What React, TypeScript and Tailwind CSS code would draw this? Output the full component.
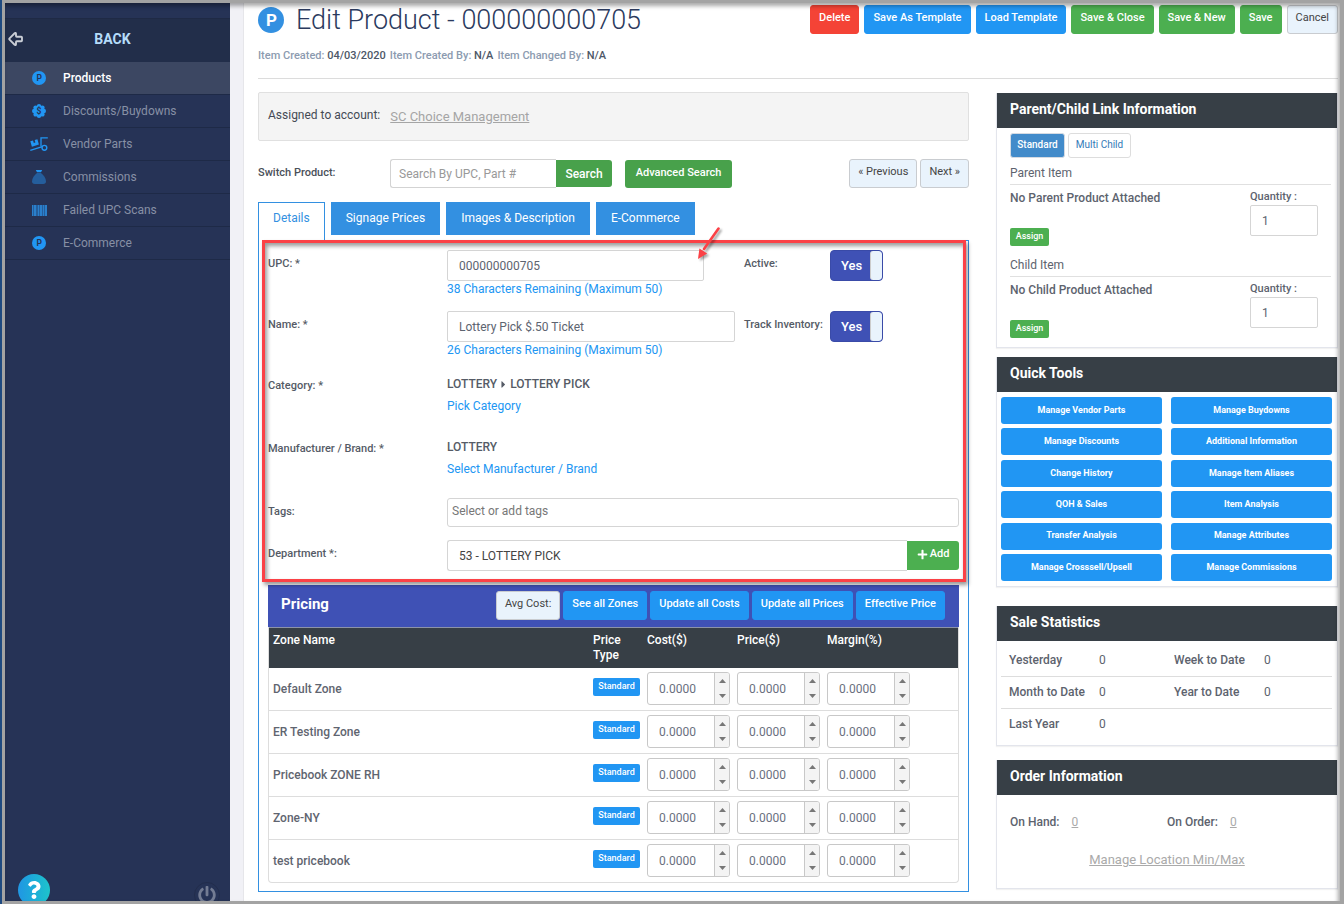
import { type ReactNode, useId, useState } from 'react';
import { ArrowBigLeft } from 'lucide-react';
import { FaCaretRight, FaPlus, FaPowerOff, FaQuestion } from 'react-icons/fa';
import clsx from 'clsx';

const navItems = [
  { label: 'Products', icon: <LetterDot letter="P" />, active: true },
  { label: 'Discounts/Buydowns', icon: <DiscountIcon /> },
  { label: 'Vendor Parts', icon: <DollyIcon /> },
  { label: 'Commissions', icon: <SackIcon /> },
  { label: 'Failed UPC Scans', icon: <BarcodeIcon /> },
  { label: 'E-Commerce', icon: <LetterDot letter="P" /> },
];

const tabs = ['Details', 'Signage Prices', 'Images & Description', 'E-Commerce'];

const zones = ['Default Zone', 'ER Testing Zone', 'Pricebook ZONE RH', 'Zone-NY', 'test pricebook'];

const priceColumns = ['Cost', 'Price', 'Margin'];

const pricingActions = ['See all Zones', 'Update all Costs', 'Update all Prices', 'Effective Price'];

const quickTools = [
  'Manage Vendor Parts',
  'Manage Buydowns',
  'Manage Discounts',
  'Additional Information',
  'Change History',
  'Manage Item Aliases',
  'QOH & Sales',
  'Item Analysis',
  'Transfer Analysis',
  'Manage Attributes',
  'Manage Crosssell/Upsell',
  'Manage Commissions',
];

const saleStats = [
  [
    ['Yesterday', '0'],
    ['Week to Date', '0'],
  ],
  [
    ['Month to Date', '0'],
    ['Year to Date', '0'],
  ],
  [['Last Year', '0']],
];

function LetterDot({ letter }: { letter: string }) {
  return (
    <svg viewBox="0 0 14 14" className="size-3.5" aria-hidden>
      <circle cx="7" cy="7" r="7" fill="#2196f3" />
      <text x="7.2" y="10" fontSize="8.5" fontWeight="700" textAnchor="middle" fill="#263356">
        {letter}
      </text>
    </svg>
  );
}

function DiscountIcon() {
  return (
    <svg viewBox="0 0 14 14" className="size-3.5" aria-hidden>
      <g fill="#2196f3">
        <circle cx="7" cy="7" r="5.8" />
        <circle cx="7" cy="2.2" r="2.2" />
        <circle cx="7" cy="11.8" r="2.2" />
        <circle cx="2.2" cy="7" r="2.2" />
        <circle cx="11.8" cy="7" r="2.2" />
        <circle cx="3.6" cy="3.6" r="2.2" />
        <circle cx="10.4" cy="3.6" r="2.2" />
        <circle cx="3.6" cy="10.4" r="2.2" />
        <circle cx="10.4" cy="10.4" r="2.2" />
      </g>
      <text x="7" y="10" fontSize="8.5" fontWeight="700" textAnchor="middle" fill="#263356">
        $
      </text>
    </svg>
  );
}

function DollyIcon() {
  return (
    <svg viewBox="0 0 18 14" className="h-3.5 w-[18px]" fill="none" aria-hidden>
      <path d="M0.3 4.3 3 3.5 3.8 6 5.4 5.5 4.7 3 7.4 2.2 8.9 7.6 1.9 9.8Z" fill="#2196f3" />
      <path d="M17.8 0.8H11V9.6" stroke="#2196f3" strokeWidth="1.3" />
      <path d="M0.3 13.3 12.4 9.6" stroke="#2196f3" strokeWidth="1.4" />
      <circle cx="14.4" cy="10.8" r="2.4" stroke="#2196f3" strokeWidth="1.4" />
    </svg>
  );
}

function SackIcon() {
  return (
    <svg viewBox="0 0 14 14" className="size-3.5" aria-hidden>
      <path d="M3.8 0H10.2L9 2.3H5Z" fill="#2196f3" />
      <path d="M5 3H9C11.6 5 14 8.4 14 11.2 14 13 13 14 11.3 14H2.7C1 14 0 13 0 11.2 0 8.4 2.4 5 5 3Z" fill="#255e9c" />
    </svg>
  );
}

function BarcodeIcon() {
  return (
    <svg viewBox="0 0 15 11" className="h-[11px] w-[15px]" aria-hidden>
      <path d="M0 0H15V11H0Z" fill="#255e9c" />
      <path d="M0 0H1V11H0ZM2 0H4V11H2ZM6 0H7V11H6ZM8 0H10V11H8ZM11 0H12V11H11ZM13 0H15V11H13Z" fill="#2a7fcb" />
    </svg>
  );
}

function Sidebar() {
  return (
    <aside className="flex w-[225px] shrink-0 flex-col bg-[#263356]">
      <button
        type="button"
        className="mt-[15px] flex h-11 items-center border-t border-[#1f2a45] bg-[#222e4a] pb-[3px] text-[14px] font-bold text-[#b5dcfa]"
      >
        <ArrowBigLeft className="ml-0.5 size-[18px] text-[#c9cdd5]" strokeWidth={2.5} aria-hidden />
        <span className="flex-1 pr-[30px] text-center">BACK</span>
      </button>
      <nav>
        <ul>
          {navItems.map((item) => (
            <li key={item.label}>
              <a
                href="#"
                className={clsx(
                  'flex h-[33px] items-center border-b border-[#1e2a47] text-[12px]',
                  item.active ? 'bg-[#3c4762] font-medium text-white' : 'text-[#8790a5]',
                )}
              >
                <span className="ml-[25px] flex w-[18px] justify-center">{item.icon}</span>
                <span className="ml-[15px] pb-px">{item.label}</span>
              </a>
            </li>
          ))}
        </ul>
      </nav>
      <div className="mt-auto flex h-[27px] items-start justify-between overflow-hidden pr-2.5 pl-[13px]">
        <button
          type="button"
          aria-label="Help"
          className="flex size-8 items-center justify-center rounded-full bg-linear-to-r from-[#2196e3] to-[#1fc3cb] text-white"
        >
          <FaQuestion className="size-[18px]" />
        </button>
        <button
          type="button"
          aria-label="Log out"
          className="mt-2 flex size-[26px] items-center justify-center rounded-full border border-[#222d4c] text-[#737c93]"
        >
          <FaPowerOff className="size-[18px]" />
        </button>
      </div>
    </aside>
  );
}

function ActionButton({ children, color }: { children: ReactNode; color: string }) {
  return (
    <button
      type="button"
      className={clsx('h-[29px] rounded-[3px] border px-2 pb-0.5 text-[11px] whitespace-nowrap', color)}
    >
      {children}
    </button>
  );
}

const blue = 'border-[#2196f3] bg-[#2196f3] font-medium text-white';
const green = 'border-[#4caf50] bg-[#4caf50] font-medium text-white';
const pale = 'border-[#c9ccd0] bg-[#e9f3fc] text-[#444]';

function PageHeader() {
  return (
    <header className="border-b border-[#dcdcdc] pt-0.5 pb-3">
      <div className="flex items-start justify-between">
        <h1 className="flex items-center gap-3 text-[27px] leading-[30px] font-light text-[#2b3a5e]">
          <svg viewBox="0 0 26 26" className="size-[26px]" aria-hidden>
            <circle cx="13" cy="13" r="13" fill="#3390e1" />
            <text x="13.5" y="19" fontSize="17" fontWeight="700" textAnchor="middle" fill="#fff">
              P
            </text>
          </svg>
          Edit Product - 000000000705
        </h1>
        <div className="flex gap-[5px]">
          <ActionButton color="border-[#f44336] bg-[#f44336] font-medium text-white">Delete</ActionButton>
          <ActionButton color={blue}>Save As Template</ActionButton>
          <ActionButton color={blue}>Load Template</ActionButton>
          <ActionButton color={green}>Save &amp; Close</ActionButton>
          <ActionButton color={green}>Save &amp; New</ActionButton>
          <ActionButton color={green}>Save</ActionButton>
          <ActionButton color={pale}>Cancel</ActionButton>
        </div>
      </div>
      <p className="mt-[11px] flex gap-1 text-[11px] leading-5 font-medium text-[#8c9bb0]">
        <span>
          Item Created: <b className="font-medium text-[#4d5767]">04/03/2020</b>
        </span>
        <span>
          Item Created By: <b className="font-medium text-[#4d5767]">N/A</b>
        </span>
        <span>
          Item Changed By: <b className="font-medium text-[#4d5767]">N/A</b>
        </span>
      </p>
    </header>
  );
}

function ProductSwitcher() {
  return (
    <form className="mt-[18px] flex h-[29px] items-center">
      <label htmlFor="switch-product" className="w-[132px] text-[11px] font-medium text-[#4a5059]">
        Switch Product:
      </label>
      <input
        id="switch-product"
        placeholder="Search By UPC, Part #"
        className="h-[29px] w-[166px] rounded-l-[3px] border border-r-0 border-[#d3d3d3] px-2 text-[12px] placeholder:text-[#999]"
      />
      <button type="button" className="h-[27px] w-14 rounded-r-[3px] bg-[#48a14b] text-[12px] font-medium text-white">
        Search
      </button>
      <button
        type="button"
        className="ml-[13px] h-7 w-[107px] rounded-[3px] bg-[#48a14b] text-[11px] font-medium text-white"
      >
        Advanced Search
      </button>
      <div className="ml-auto flex gap-[3px]">
        <ActionButton color={pale}>« Previous</ActionButton>
        <ActionButton color={pale}>Next »</ActionButton>
      </div>
    </form>
  );
}

function Toggle({ label }: { label: string }) {
  const id = useId();
  const [on, setOn] = useState(true);
  return (
    <>
      <label htmlFor={id} className="w-[86px] pt-1 text-[11px] leading-5 font-medium whitespace-nowrap text-[#555b66]">
        {label}
      </label>
      <label className="flex h-[31px] w-[53px] cursor-pointer overflow-hidden rounded-[4px] border border-[#3a4ba8] bg-[#3f51b5]">
        <input id={id} type="checkbox" checked={on} onChange={() => setOn(!on)} className="sr-only" />
        <span className="flex-1 pl-0.5 text-center text-[13px] leading-[30px] font-medium text-white">
          {on ? 'Yes' : 'No'}
        </span>
        <span className="w-3 rounded-[3px] border-l border-[#ccc] bg-[#e9f3fc]" />
      </label>
    </>
  );
}

const labelClass = 'w-[179px] shrink-0 text-[11px] leading-5 font-medium text-[#555b66]';
const boxClass = 'rounded-[2px] border border-[#d5d5d5] bg-white text-[12px] text-[#5d6470]';

function DetailsForm() {
  return (
    <div className="relative">
      <div className="flex h-[61px] items-start">
        <label htmlFor="upc" className={clsx(labelClass, 'pt-1')}>
          UPC: *
        </label>
        <div className="w-[297px] text-[12px] leading-4 text-[#2196f3]">
          <input id="upc" defaultValue="000000000705" className={clsx(boxClass, 'block h-[31px] w-[257px] px-[11px]')} />
          38 Characters Remaining (Maximum 50)
        </div>
        <Toggle label="Active:" />
      </div>
      <div className="flex h-[63px] items-start">
        <label htmlFor="name" className={clsx(labelClass, 'pt-1')}>
          Name: *
        </label>
        <div className="w-[297px] text-[12px] leading-4 text-[#2196f3]">
          <input
            id="name"
            defaultValue="Lottery Pick $.50 Ticket"
            className={clsx(boxClass, 'block h-[31px] w-[288px] px-[11px]')}
          />
          26 Characters Remaining (Maximum 50)
        </div>
        <Toggle label="Track Inventory:" />
      </div>
      <div className="flex h-[63px] items-start text-[12px] leading-5">
        <span className={clsx(labelClass, 'pt-0.5')}>Category: *</span>
        <div>
          <p className="mb-0.5 flex items-center gap-px font-medium text-[#555b66]">
            LOTTERY <FaCaretRight className="size-[11px]" aria-label="then" /> LOTTERY PICK
          </p>
          <a href="#" className="text-[#2196f3]">
            Pick Category
          </a>
        </div>
      </div>
      <div className="flex h-[61px] items-start text-[12px] leading-5">
        <span className={clsx(labelClass, 'pt-0.5')}>Manufacturer / Brand: *</span>
        <div>
          <p className="mb-0.5 font-medium text-[#555b66]">LOTTERY</p>
          <a href="#" className="text-[#2196f3]">
            Select Manufacturer / Brand
          </a>
        </div>
      </div>
      <div className="flex items-start">
        <label htmlFor="tags" className={clsx(labelClass, 'pt-1')}>
          Tags:
        </label>
        <input
          id="tags"
          placeholder="Select or add tags"
          className="h-[29px] min-w-0 flex-1 rounded-[3px] border border-[#d5d5d5] px-1 pb-1 text-[12px] placeholder:text-[#777]"
        />
      </div>
      <div className="mt-[13px] flex items-start pb-3.5">
        <label htmlFor="department" className={clsx(labelClass, 'pt-1')}>
          Department *:
        </label>
        <select
          id="department"
          className="h-[31px] min-w-0 flex-1 appearance-none rounded-l-[3px] border border-r-0 border-[#d5d5d5] bg-white px-[11px] text-[12px] text-[#444]"
        >
          <option>53 - LOTTERY PICK</option>
        </select>
        <button
          type="button"
          className="mt-px flex h-[29px] w-[52px] items-center justify-center gap-0.5 rounded-r-[3px] bg-[#4caf50] pb-0.5 text-[11px] font-medium text-white"
        >
          <FaPlus className="size-[11px]" aria-hidden />
          Add
        </button>
      </div>

      {/* callout around the form, with its pointer */}
      <div className="pointer-events-none absolute -top-2.5 -right-[7px] bottom-[3px] -left-1.5 z-10 border-3 border-[#fb4146] shadow-[2px_3px_4px_rgba(0,0,0,0.4),inset_2px_3px_4px_rgba(0,0,0,0.4)]" />
      <svg
        viewBox="0 0 26 36"
        className="pointer-events-none absolute -top-[25px] left-[428px] z-10 h-9 w-[26px] drop-shadow-[2px_2px_1px_rgba(0,0,0,0.35)]"
        aria-hidden
      >
        <path d="M22.5 3.5 8 24" stroke="#fb4146" strokeWidth="2.6" strokeLinecap="round" />
        <path d="M2 34 3.4 23.4 11.2 28.4Z" fill="#fb4146" />
      </svg>
    </div>
  );
}

function PriceInput({ label }: { label: string }) {
  return (
    <div className="flex h-[33px] w-[83px] overflow-hidden rounded-[3px] border border-[#c8c8c8] bg-white">
      <input
        aria-label={label}
        defaultValue="0.0000"
        className="w-[67px] min-w-0 border-r border-[#c8c8c8] pl-[11px] text-[12px] text-[#6a7080]"
      />
      <div className="flex flex-1 flex-col bg-[#f4f4f4] text-[#777]">
        <button type="button" aria-label={`Increase ${label}`} className="flex flex-1 items-center justify-center">
          <svg viewBox="0 0 7 4" className="h-1 w-[7px]" fill="currentColor" aria-hidden>
            <path d="M3.5 0 7 4H0Z" />
          </svg>
        </button>
        <button type="button" aria-label={`Decrease ${label}`} className="flex flex-1 items-center justify-center">
          <svg viewBox="0 0 7 4" className="h-1 w-[7px]" fill="currentColor" aria-hidden>
            <path d="M3.5 4 0 0H7Z" />
          </svg>
        </button>
      </div>
    </div>
  );
}

function PricingTable() {
  return (
    <section>
      <div className="flex h-[42px] items-center bg-[#3f51b5] pr-3.5 pl-[13px]">
        <h2 className="mr-auto pb-[3px] text-[15px] font-bold text-white">Pricing</h2>
        <div className="flex gap-[3px] pb-0.5">
          <ActionButton color={pale}>Avg Cost:</ActionButton>
          {pricingActions.map((action) => (
            <ActionButton key={action} color={blue}>
              {action}
            </ActionButton>
          ))}
        </div>
      </div>
      <table className="w-full table-fixed border-separate border-spacing-0 rounded-b-[4px] border border-t-0 border-[#ddd] text-left">
        <colgroup>
          <col />
          <col className="w-[54px]" />
          <col className="w-[90px]" />
          <col className="w-[90px]" />
          <col className="w-[135px]" />
        </colgroup>
        <thead>
          <tr className="h-[41px] bg-[#373f46] align-top text-[12px] leading-[15px] text-white">
            {['Zone Name', 'Price Type', 'Cost($)', 'Price($)', 'Margin(%)'].map((head) => (
              <th key={head} scope="col" className="border-t border-[#8c93a8] pt-[5px] pl-1 font-medium">
                {head}
              </th>
            ))}
          </tr>
        </thead>
        <tbody>
          {zones.map((zone, i) => {
            const line = i < zones.length - 1 && 'border-b border-[#ddd]';
            return (
              <tr key={zone} className="h-[43px] align-top last:h-[42px]">
                <th scope="row" className={clsx('pl-1 align-middle text-[12px] font-medium text-[#5f6570]', line)}>
                  {zone}
                </th>
                <td className={clsx('pt-2.5 pl-1', line)}>
                  <button
                    type="button"
                    className="block h-[18px] w-[47px] rounded-[2px] bg-[#2196f3] pb-px text-[9px] font-medium text-white"
                  >
                    Standard
                  </button>
                </td>
                {priceColumns.map((column) => (
                  <td key={column} className={clsx('pt-1 pl-1', line)}>
                    <PriceInput label={`${zone} ${column}`} />
                  </td>
                ))}
              </tr>
            );
          })}
        </tbody>
      </table>
    </section>
  );
}

function Card({ title, children }: { title: string; children: ReactNode }) {
  return (
    <section className="border border-t-0 border-[#e3e5ec] shadow-[0_1px_1px_rgba(0,0,0,0.05)]">
      <h2 className="h-[35px] bg-[#373f46] pl-[13px] text-[14px] leading-[33px] font-bold text-white">{title}</h2>
      {children}
    </section>
  );
}

function LinkedItem({ kind }: { kind: string }) {
  const id = useId();
  return (
    <div className="pr-1 pb-[9px] text-[#5d636e]">
      <h3 className="border-b border-[#e0e0e0] pb-px text-[12px] leading-5">{kind} Item</h3>
      <div className="flex justify-between pt-1 pr-[13px]">
        <div>
          <p className="text-[12px] leading-[18px] font-medium">No {kind} Product Attached</p>
          <button
            type="button"
            className="mt-[21px] block h-[18px] w-[39px] rounded-[2px] bg-[#4caf50] text-[9px] font-medium text-white"
          >
            Assign
          </button>
        </div>
        <div>
          <label htmlFor={id} className="block text-[11px] leading-4 font-medium">
            Quantity :
          </label>
          <input id={id} defaultValue="1" className={clsx(boxClass, 'block h-[31px] w-[68px] px-[11px]')} />
        </div>
      </div>
    </div>
  );
}

function RightColumn() {
  return (
    <div className="w-[342px] shrink-0 pt-px">
      <Card title="Parent/Child Link Information">
        <div className="pt-[5px] pr-0.5 pl-[13px]">
          <div className="mb-[5px] flex gap-[3px] text-[10px]">
            <button
              type="button"
              className="h-[25px] w-[55px] rounded-[3px] border border-[#d5dbe3] bg-[#428bca] pb-0.5 font-medium text-white"
            >
              Standard
            </button>
            <button type="button" className="h-[25px] w-[63px] rounded-[3px] border border-[#ddd] pb-0.5 text-[#337ab7]">
              Multi Child
            </button>
          </div>
          <LinkedItem kind="Parent" />
          <LinkedItem kind="Child" />
        </div>
      </Card>
      <div className="mt-[9px]">
        <Card title="Quick Tools">
          <div className="my-[5px] grid h-46 grid-cols-2 content-between gap-x-[9px] pr-[5px] pl-1">
            {quickTools.map((tool) => (
              <button
                key={tool}
                type="button"
                className="h-[27px] rounded-[3px] bg-[#2196f3] text-[9px] font-bold text-white"
              >
                {tool}
              </button>
            ))}
          </div>
        </Card>
      </div>
      <div className="mt-[19px]">
        <Card title="Sale Statistics">
          <table className="mx-1 mt-[3px] mb-[5px] w-[331px] text-left text-[12px] text-[#5d636e]">
            <tbody>
              {saleStats.map((row, i) => (
                <tr key={i} className="h-8 border-b border-[#ddd] last:border-b-0">
                  {row.map(([label, value], j) => [
                    <th key={label} scope="row" className="w-[90px] pl-2 font-medium whitespace-nowrap">
                      {label}
                    </th>,
                    <td key={`${label}-value`} className={j ? 'pl-2' : 'w-[75px] pl-2'}>
                      {value}
                    </td>,
                  ])}
                </tr>
              ))}
            </tbody>
          </table>
        </Card>
      </div>
      <div className="mt-3.5">
        <Card title="Order Information">
          <div className="px-[13px] pt-[17px] pb-[18px] text-[12px] leading-5 text-[#5d636e]">
            <div className="flex">
              <p className="w-[157px] font-medium">
                On Hand:
                <a href="#" className="ml-3 font-normal text-[#aaa] underline">
                  0
                </a>
              </p>
              <p className="font-medium">
                On Order:
                <a href="#" className="ml-3 font-normal text-[#aaa] underline">
                  0
                </a>
              </p>
            </div>
            <p className="mt-[18px] text-center text-[13px]">
              <a href="#" className="text-[#aaa] underline">
                Manage Location Min/Max
              </a>
            </p>
          </div>
        </Card>
      </div>
    </div>
  );
}

export default function App() {
  const [tab, setTab] = useState('Details');

  return (
    <div className="min-h-screen border-l-2 border-[#1f4a80] bg-white font-[Roboto,'Liberation_Sans',sans-serif]">
      <div className="relative flex min-h-screen border-3 border-r-4 border-[#a3a3a3]">
        <Sidebar />
        <main className="ml-[13px] min-w-0 flex-1 border-l border-[#e6e6ea] pr-0.5 pb-[9px] pl-3.5 shadow-[-13px_0_0_#f1f1f6]">
          <PageHeader />
          <div className="mt-[13px] flex gap-[27px]">
            <div className="min-w-0 flex-1">
              <div className="flex h-[49px] items-center gap-2.5 rounded-[2px] border border-[#e0e0e0] bg-[#f4f4f4] px-[9px] text-[12px] text-[#444a55]">
                <span className="pb-1">Assigned to account:</span>
                <a href="#" className="text-[13px] text-[#a5a5a5] underline">
                  SC Choice Management
                </a>
              </div>
              <ProductSwitcher />
              <div role="tablist" className="mt-3.5 flex items-start gap-1.5">
                {tabs.map((name) => (
                  <button
                    key={name}
                    type="button"
                    role="tab"
                    aria-selected={tab === name}
                    onClick={() => setTab(name)}
                    className={clsx(
                      'border-[#3390e1] text-[12px] leading-[31px]',
                      tab === name
                        ? 'relative -mb-px h-[39px] border border-b-0 bg-white px-3.5 pb-2 text-[#3390e1]'
                        : 'h-[33px] bg-[#3390e1] px-[15px] text-white',
                    )}
                  >
                    {name}
                  </button>
                ))}
              </div>
              <div role="tabpanel" className="border border-[#3390e1] px-[9px] pt-[9px] pb-2">
                <DetailsForm />
                <PricingTable />
              </div>
            </div>
            <RightColumn />
          </div>
        </main>
        <div className="pointer-events-none absolute inset-0 z-20 shadow-[inset_-2px_3px_4px_rgba(0,0,0,0.35)]" />
      </div>
    </div>
  );
}
